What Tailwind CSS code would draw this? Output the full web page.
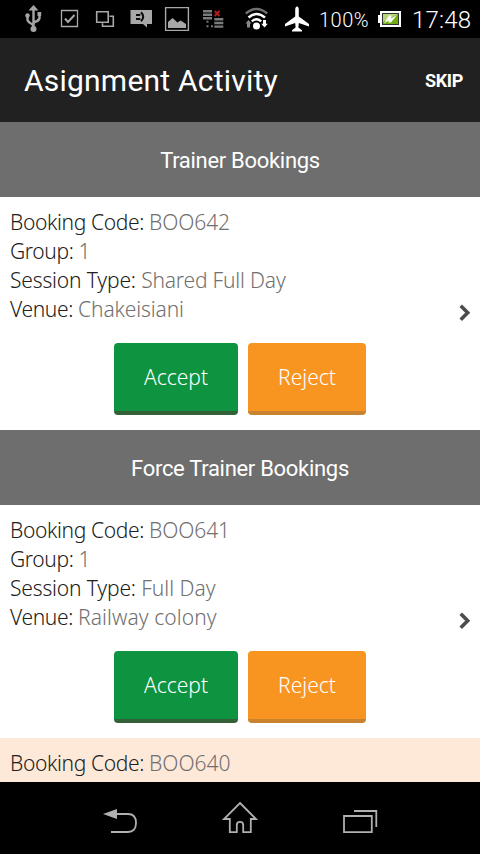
<!DOCTYPE html>
<html lang="en">
<head>
<meta charset="utf-8">
<title>Asignment Activity</title>
<script src="https://cdn.jsdelivr.net/npm/@tailwindcss/browser@4"></script>
</head>
<body class="bg-black">
<div class="flex h-[854px] w-[480px] flex-col overflow-hidden bg-white font-['Roboto','Liberation_Sans',sans-serif]">
  <!-- Status bar -->
  <div class="flex h-[38px] shrink-0 items-center bg-black pl-6 text-white">
    <svg class="h-[38px] w-[20px] shrink-0" viewBox="24 0 20 38" fill="none" stroke="#a6a6a6" stroke-width="2.400"><path d="M33.5 29V9M33.5 27Q33.500 24.500 31 23.500T27.500 20V16M33.500 24Q33.500 22 36 21.500T39.500 18V14"/><path d="M33.500 5L38.500 10.500H28.500ZM37.500 12h3.700v4h-3.700z" fill="#a6a6a6" stroke="none"/><circle cx="27.500" cy="15.500" r="2.200" fill="#a6a6a6" stroke="none"/><circle cx="33.500" cy="29" r="3" fill="#a6a6a6" stroke="none"/></svg>
    <svg class="ml-[14px] h-[38px] w-[22px] shrink-0" viewBox="58 0 22 38" fill="none" stroke="#a8a8a8"><path stroke-width="1.300" d="M61.500 10.500h16v16h-16z"/><path stroke-width="2" d="M65 18.500l3 3.500 6.500-7"/></svg>
    <svg class="ml-[14px] h-[38px] w-[22px] shrink-0" viewBox="94 0 22 38" fill="none" stroke="#a8a8a8" stroke-width="1.600"><path d="M96.700 11.700h11.500v10.500H96.700zM109.500 16.300h3.800v10H102.500v-3"/></svg>
    <svg class="ml-[12px] h-[38px] w-[26px] shrink-0" viewBox="128 0 26 38"><path fill="#a8a8a8" d="M130.500 10h21.500v14h-5v3.500l-4-3.500h-12.500z"/><path fill="none" stroke="#0a0a0a" stroke-width="2" d="M136 15h4.300M136 19h4.300M141 12.300q4.500 4.500 0 9"/></svg>
    <svg class="ml-[9px] h-[38px] w-[28px] shrink-0" viewBox="163 0 28 38"><path fill="none" stroke="#a8a8a8" stroke-width="1.400" d="M165.600 7.600h22.800v22.800h-22.800z"/><path fill="#a8a8a8" d="M168 28v-6l4.500-4 5 4.500 3-2 5.500 3.500v4z"/></svg>
    <svg class="ml-[9px] h-[38px] w-[26px] shrink-0" viewBox="200 0 26 38" fill="none"><path stroke="#7c7c7c" stroke-width="2.400" d="M203 11.300h9M203 14.800h9M203 18.300h9M214.300 19.300h9M214.300 23h9M214.300 26.600h9"/><path stroke="#777" stroke-width="2" d="M206.500 21.700h2M206.500 26.300h2M211 26.300h2"/><path stroke="#b01c1c" stroke-width="2" d="M214.700 11l4.800 5M219.500 11l-4.800 5"/></svg>
    <svg class="ml-[17px] h-[38px] w-[27px] shrink-0" viewBox="243 0 27 38" fill="none" stroke-linecap="butt"><path stroke="#707070" stroke-width="2.300" d="M245.800 13.500q10.700-9 21.400 0"/><path stroke="#fff" stroke-width="2.400" d="M248.500 17.500q8-7 16.500 0M251.800 21.300q4.700-4 9.400 0"/><circle cx="256.500" cy="26" r="3.500" fill="#fff"/><path fill="#888" d="M248.500 20l3 3.500h-1.500v4h-3v-4h-1.500z"/><path fill="#fff" d="M264.500 27.500l-3.300-3.800h1.800v-3.700h3v3.700h1.800z"/></svg>
    <svg class="ml-[14px] h-[38px] w-[27px] shrink-0" viewBox="284 0 27 38"><path fill="#fff" d="M297 6.500q1.800 0 1.800 3.500v6.500l10.200 7.500v2.500l-10.200-3.500-.4 4.500 3.600 2.800v1.200H292v-1.200l3.600-2.800-.4-4.500L285 26.500V24l10.200-7.500V10q0-3.500 1.800-3.500z"/></svg>
    <span class="ml-[8px] w-[59px] shrink-0 pt-[2px] text-[20px] leading-[38px] font-light tracking-[0.5px] whitespace-nowrap text-white">100%</span>
    <svg class="h-[38px] w-[24px] shrink-0" viewBox="378 0 24 38"><path fill="#fff" d="M380 11h21v16h-21v-4h-2v-8h2z"/><path fill="#333" d="M382 13h17v12h-17z"/><path fill="#6fae12" d="M383 14h15v10h-15z"/><path fill="#b5d67a" d="M383 14h15l-15 8z"/><path fill="#fff" d="M384 23.500l5-8h2.500l-.5 3 6-3.500-6 7.500h-2.500v-2z"/></svg>
    <span class="ml-[10px] pt-[1px] text-[24px] leading-[38px] font-light tracking-[0.2px] whitespace-nowrap">17:48</span>
  </div>
  <!-- Action bar -->
  <header class="flex h-[84px] shrink-0 items-center justify-between bg-[#212121] pr-[17px] pl-6 text-white">
    <h1 class="pt-[2px] text-[30px] leading-[36px] font-normal tracking-[0.22px]">Asignment Activity</h1>
    <span class="pt-px text-[18px] font-bold tracking-[-0.35px]">SKIP</span>
  </header>
  <main class="h-[660px] shrink-0 overflow-hidden font-['Noto_Sans','Open_Sans',sans-serif] text-[21px] leading-[29px] font-light text-[#202020]">
    <h2 class="flex h-[75px] items-center justify-center bg-[#6e6e6e] pt-[2px] font-['Roboto',sans-serif] text-[22px] font-normal tracking-[-0.3px] text-white">Trainer Bookings</h2>
    <section class="h-[233px] px-[10px] pt-[11px]">
      <p><span class="tracking-[-0.36px]">Booking Code: </span><span class="tracking-[-0.1px] text-[#707070]">BOO642</span></p>
      <p><span class="tracking-[-0.36px]">Group: </span><span class="text-[#707070]">1</span></p>
      <p><span class="tracking-[-0.16px]">Session Type: </span><span class="tracking-[-0.18px] text-[#707070]">Shared Full Day</span></p>
      <div class="flex justify-between"><p><span class="tracking-[-0.36px]">Venue: </span><span class="tracking-[-0.12px] text-[#707070]">Chakeisiani</span></p>
        <svg class="-mr-[1px] mt-[8px] h-[19px] w-[12px]" viewBox="0 0 12 19" fill="none" stroke="#4c4c4c" stroke-width="3.600" stroke-linecap="square"><path d="M3 4l5.700 5.700L3 15.400"/></svg></div>
      <div class="mt-[19px] flex justify-center gap-[10px] text-white">
        <button class="h-[72px] w-[124px] rounded-[4px] border-b-4 border-[#346038] bg-[#0e9441]">Accept</button>
        <button class="h-[72px] w-[118px] rounded-[4px] border-b-4 border-[#c9822f] bg-[#f89521]">Reject</button>
      </div>
    </section>
    <h2 class="flex h-[75px] items-center justify-center bg-[#6e6e6e] pt-[2px] font-['Roboto',sans-serif] text-[22px] font-normal tracking-[-0.3px] text-white">Force Trainer Bookings</h2>
    <section class="h-[233px] px-[10px] pt-[11px]">
      <p><span class="tracking-[-0.36px]">Booking Code: </span><span class="tracking-[-0.1px] text-[#707070]">BOO641</span></p>
      <p><span class="tracking-[-0.36px]">Group: </span><span class="text-[#707070]">1</span></p>
      <p><span class="tracking-[-0.16px]">Session Type: </span><span class="text-[#707070]">Full Day</span></p>
      <div class="flex justify-between"><p><span class="tracking-[-0.36px]">Venue: </span><span class="tracking-[0.06px] text-[#707070]">Railway colony</span></p>
        <svg class="-mr-[1px] mt-[8px] h-[19px] w-[12px]" viewBox="0 0 12 19" fill="none" stroke="#4c4c4c" stroke-width="3.600" stroke-linecap="square"><path d="M3 4l5.700 5.700L3 15.400"/></svg></div>
      <div class="mt-[19px] flex justify-center gap-[10px] text-white">
        <button class="h-[72px] w-[124px] rounded-[4px] border-b-4 border-[#346038] bg-[#0e9441]">Accept</button>
        <button class="h-[72px] w-[118px] rounded-[4px] border-b-4 border-[#c9822f] bg-[#f89521]">Reject</button>
      </div>
    </section>
    <section class="h-[44px] bg-[#fee9d9] px-[10px] pt-[11px]">
      <p><span class="tracking-[-0.36px]">Booking Code: </span><span class="text-[#707070]">BOO640</span></p>
    </section>
  </main>
  <!-- Navigation bar -->
  <nav class="flex h-[72px] shrink-0 items-center justify-between bg-black px-[101px]">
    <svg class="h-[72px] w-[38px]" viewBox="101 782 38 72" fill="none" stroke="#b0b0b0" stroke-width="1.800"><path d="M115 814h13q8 0 8 9t-8 9h-17"/><path fill="#b0b0b0" stroke="none" d="M103 814l14-5v10z"/></svg>
    <svg class="h-[72px] w-[38px]" viewBox="221 782 38 72" fill="none" stroke="#b0b0b0" stroke-width="1.800"><path d="M240 803l16 16h-5.200v13.200h-7.600V825q0-3.200-3.200-3.200t-3.200 3.200v7.200h-7v-13.200H224z"/></svg>
    <svg class="h-[72px] w-[38px]" viewBox="341 782 38 72" fill="none" stroke="#b0b0b0" stroke-width="1.800"><path d="M344 816h27.800v16.200H344zM354 811h22.300v16"/></svg>
  </nav>
</div>
</body>
</html>
